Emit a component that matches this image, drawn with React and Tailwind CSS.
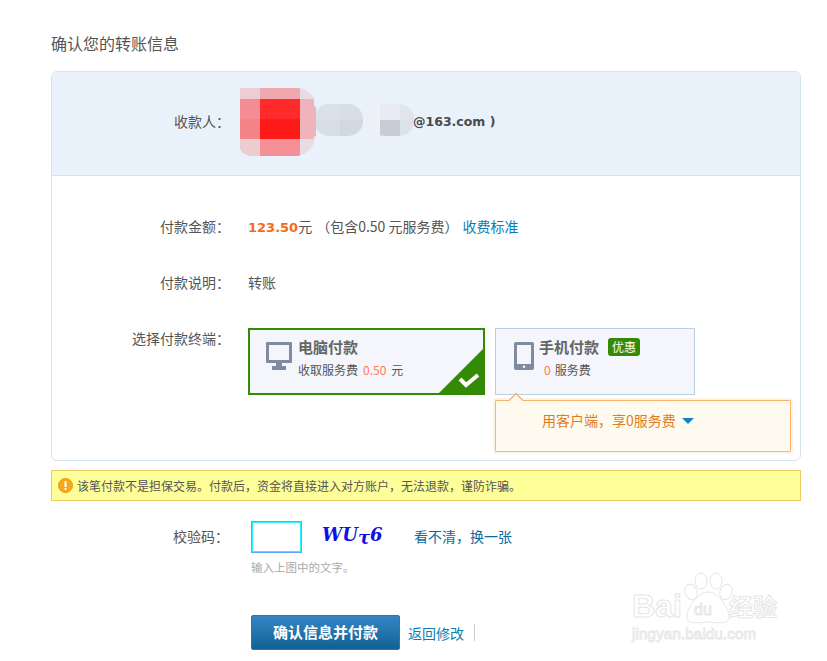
const FONT = "font-['Noto_Sans_CJK_SC','Liberation_Sans',sans-serif]";
const LATIN = "font-['DejaVu_Sans','Noto_Sans_CJK_SC',sans-serif]";

function Mosaic() {
  const xs = [0, 20, 60, 74];
  const ys = [0, 12, 32, 52, 69];
  const colors = [
    ["#eccdd3", "#eea8ae", "#e8dbe3"],
    ["#f48d93", "#ff2a2a", "#efb4bb"],
    ["#f48488", "#ff1a1a", "#efb4bb"],
    ["#eecbd1", "#f49096", "#e8dbe3"],
  ];
  return (
    <svg width="174" height="70" viewBox="0 0 174 70" className="block shrink-0">
      <defs>
        <clipPath id="red-blob">
          <path d="M0 1 H58 Q70 2 74 12 V19 L76 20 V49 L74 50 V56 Q70 66 58 69 H10 Q2 67 0 62 Z" />
        </clipPath>
        <clipPath id="grey-a">
          <rect x="74" y="17" width="49" height="32" rx="15" />
        </clipPath>
        <clipPath id="grey-b">
          <rect x="129" y="17" width="45" height="32" rx="15" />
        </clipPath>
      </defs>
      <g clipPath="url(#grey-a)">
        <rect x="74" y="17" width="26" height="16" fill="#dbe1e8" />
        <rect x="100" y="17" width="23" height="16" fill="#d8dee5" />
        <rect x="74" y="33" width="26" height="16" fill="#d8dee5" />
        <rect x="100" y="33" width="23" height="16" fill="#d2d8df" />
      </g>
      <g clipPath="url(#grey-b)">
        <rect x="129" y="17" width="11" height="16" fill="#eef1f6" />
        <rect x="140" y="17" width="20" height="16" fill="#e8ebf1" />
        <rect x="160" y="17" width="14" height="16" fill="#e0e5ec" />
        <rect x="129" y="33" width="11" height="16" fill="#eef1f6" />
        <rect x="140" y="33" width="20" height="16" fill="#c9ced6" />
        <rect x="160" y="33" width="14" height="16" fill="#dde2e9" />
      </g>
      <g clipPath="url(#red-blob)">
        {colors.map((row, r) =>
          row.map((c, i) => (
            <rect key={r + "-" + i} x={xs[i]} y={ys[r]} width={xs[i + 1] - xs[i] + 2} height={ys[r + 1] - ys[r]} fill={c} />
          ))
        )}
      </g>
    </svg>
  );
}

function Row({ label, children }) {
  return (
    <div className="flex">
      <div className="w-[178px] mr-[18px] text-right text-[14px] leading-[20px] text-[#555] shrink-0">{label}</div>
      {children}
    </div>
  );
}

function PcCard() {
  return (
    <div className="relative w-[237px] h-[67px] border-2 border-[#338a05] bg-[#f5f6fb] flex pl-[16px] pt-[12px] gap-[6px]">
      <svg width="26" height="28" viewBox="0 0 26 28" className="block shrink-0">
        <path fillRule="evenodd" d="M1 0H25a1 1 0 0 1 1 1V20a1 1 0 0 1-1 1H16V24H20V28H6V24H10V21H1a1 1 0 0 1-1-1V1a1 1 0 0 1 1-1ZM3 3V18H23V3Z" fill="#7f8ba1" />
      </svg>
      <div>
        <div className="text-[15px] leading-[20px] font-bold text-[#666] -mt-[5px]">电脑付款</div>
        <div className="text-[12px] leading-[16px] text-[#555] mt-[5px]">
          收取服务费<span className="text-[#ff7a59] ml-[5px] mr-[5px]">0.50</span>元
        </div>
      </div>
      <svg width="44" height="44" viewBox="0 0 44 44" className="absolute right-0 bottom-0 block">
        <path d="M44 0V44H0Z" fill="#338a05" />
        <path d="M21 30L27 36L39 26" fill="none" stroke="#fff" strokeWidth="4" />
      </svg>
    </div>
  );
}

function PhoneCard() {
  return (
    <div className="w-[200px] h-[67px] border border-[#bccfe2] bg-[#f5f6fb] flex pl-[18px] pt-[13px] gap-[5px]">
      <svg width="20" height="28" viewBox="0 0 20 28" className="block shrink-0">
        <path fillRule="evenodd" d="M2 0H18a2 2 0 0 1 2 2V26a2 2 0 0 1-2 2H2a2 2 0 0 1-2-2V2a2 2 0 0 1 2-2ZM3 3V22H17V3ZM10 23.5a1.3 1.3 0 1 0 0 2.6a1.3 1.3 0 0 0 0-2.6Z" fill="#7f8ba1" />
      </svg>
      <div>
        <div className="flex items-center -mt-[5px]">
          <span className="text-[15px] leading-[20px] font-bold text-[#666]">手机付款</span>
          <span className="ml-[9px] w-[32px] h-[18px] rounded-[3px] bg-[#338a05] text-white text-[12px] leading-[18px] text-center">优惠</span>
        </div>
        <div className="text-[12px] leading-[16px] text-[#555] mt-[5px] pl-[5px]">
          <span className="text-[#ff7a59] mr-[4px]">0</span>服务费
        </div>
      </div>
    </div>
  );
}

function Tip() {
  return (
    <div className="relative mt-[5px] w-[296px] h-[52px] border border-[#fbb56a] bg-[#fffaf0] shadow-[0_0_0_2px_#fdf3e6] rounded-[1px] flex items-center pl-[46px] pb-[12px]">
      <span className="absolute left-[15px] -top-[6px] w-[10px] h-[10px] rotate-45 border-l border-t border-[#fb9a4a] bg-[#fffaf0]" />
      <span className="text-[14px] leading-[20px] text-[#e07c1c]">用客户端，享0服务费</span>
      <span className="ml-[6px] mt-[2px] w-0 h-0 border-x-[6px] border-x-transparent border-t-[6px] border-t-[#0a86c6]" />
    </div>
  );
}

function Watermark() {
  return (
    <div className="absolute left-[632px] top-[570px] w-[160px] h-[90px] pointer-events-none text-transparent">
      <svg width="50" height="56" viewBox="0 0 50 56" className="absolute left-[51px] top-[2px] block" fill="#fff" stroke="#e6e6e6" strokeWidth="1">
        <ellipse cx="8" cy="20" rx="6" ry="8" transform="rotate(-20 8 20)" />
        <ellipse cx="18" cy="9" rx="6" ry="8" />
        <ellipse cx="33" cy="9" rx="6" ry="8" />
        <ellipse cx="43" cy="20" rx="6" ry="8" transform="rotate(20 43 20)" />
        <path d="M25 20C35 20 46 36 46 44C46 54 34 50 25 50C16 50 4 54 4 44C4 36 15 20 25 20Z" />
      </svg>
      <span className="absolute left-0 top-[18px] text-[32px] leading-[36px] font-bold [-webkit-text-stroke:1px_#e6e6e6] font-['Liberation_Sans',sans-serif]">Bai</span>
      <span className="absolute left-[62px] top-[30px] text-[16px] leading-[20px] [-webkit-text-stroke:1px_#e6e6e6] font-['Liberation_Sans',sans-serif]">du</span>
      <span className="absolute left-[97px] top-[21px] text-[24px] leading-[30px] font-bold [-webkit-text-stroke:1px_#e6e6e6]">经验</span>
      <span className="absolute left-0 top-[54px] text-[15px] leading-[20px] tracking-[0.2px] [-webkit-text-stroke:1px_#e8e8e8] font-['Liberation_Sans',sans-serif]">jingyan.baidu.com</span>
    </div>
  );
}

export default function App() {
  return (
    <div className={`relative w-[827px] h-[661px] overflow-hidden bg-white pl-[51px] pr-[26px] pt-[33px] ${FONT}`}>
      <h1 className="text-[16px] leading-[20px] font-normal text-[#555]">确认您的转账信息</h1>

      <div className="mt-[18px] h-[390px] rounded-[6px] border border-[#d5e3ec]">
        <div className="h-[104px] rounded-t-[6px] bg-[#e9f1fa] border-b border-[#d5e3ec] flex items-center">
          <div className="w-[178px] text-right text-[14px] leading-[20px] text-[#555] shrink-0 -mt-[5px]">收款人：</div>
          <div className="ml-[10px] -mt-[3px]"><Mosaic /></div>
          <span className={`${LATIN} text-[12.5px] leading-[20px] font-bold text-[#4a4a4a] -ml-[1px] -mt-[4px]`}>@163.com )</span>
        </div>

        <div className="pt-[40px] flex flex-col gap-[36px]">
          <Row label="付款金额：">
            <div className="h-[20px] text-[14px] leading-[20px] text-[#555]">
              <span className={`${LATIN} text-[13px] leading-[16px] font-bold text-[#f26a1b]`}>123.50</span>元
              <span className="ml-[4px]">（包含0.50 元服务费）</span>
              <span className="ml-[4px] text-[#0a7fb5]">收费标准</span>
            </div>
          </Row>
          <Row label="付款说明：">
            <div className="text-[14px] leading-[20px] text-[#555]">转账</div>
          </Row>
          <div>
            <Row label="选择付款终端：">
              <div>
                <div className="flex gap-[10px]">
                  <PcCard />
                  <PhoneCard />
                </div>
                <div className="ml-[247px]"><Tip /></div>
              </div>
            </Row>
          </div>
        </div>
      </div>

      <div className="mt-[9px] h-[31px] border border-[#eecb66] bg-[#ffff99] flex items-center pl-[6px] gap-[4px] text-[12px] text-[#555]">
        <svg width="15" height="15" viewBox="0 0 15 15" className="block shrink-0">
          <circle cx="7.5" cy="7.5" r="7" fill="#f5a81c" stroke="#e8961a" />
          <rect x="6.5" y="3" width="2" height="6" fill="#fff" />
          <rect x="6.5" y="10" width="2" height="2" fill="#fff" />
        </svg>
        <span className="leading-[16px]">该笔付款不是担保交易。付款后，资金将直接进入对方账户，无法退款，谨防诈骗。</span>
      </div>

      <div className="mt-[20px] flex">
        <div className="w-[178px] mr-[22px] text-right text-[14px] leading-[30px] text-[#555] shrink-0">校验码：</div>
        <div>
          <div className="flex items-center">
            <div className="w-[51px] h-[32px] border-2 border-[#2ef0ff] outline outline-1 outline-[#5aa9ff] -outline-offset-1 bg-white" />
            <span className="ml-[20px] w-[92px] -mt-[4px] text-[#1010e8] font-['DejaVu_Serif',serif] italic font-bold text-[18px] leading-[28px]">WU<span className="inline-block translate-y-[3px]">τ</span>6</span>
            <span className="text-[14px] leading-[20px] text-[#0b6aa0] -mt-[3px]">看不清，换一张</span>
          </div>
          <div className="mt-[6px] text-[11.5px] leading-[16px] text-[#aaa]">输入上图中的文字。</div>
          <div className="mt-[40px] flex items-center">
            <button className="w-[149px] h-[35px] rounded-[2px] border border-[#2b76ac] bg-gradient-to-b from-[#3585c5] to-[#0d6295] text-white text-[15px] font-bold">确认信息并付款</button>
            <span className="ml-[8px] text-[14px] leading-[20px] text-[#0a7fb5]">返回修改</span>
            <span className="ml-[10px] w-px h-[17px] bg-[#ccc]" />
          </div>
        </div>
      </div>

      <Watermark />
    </div>
  );
}
